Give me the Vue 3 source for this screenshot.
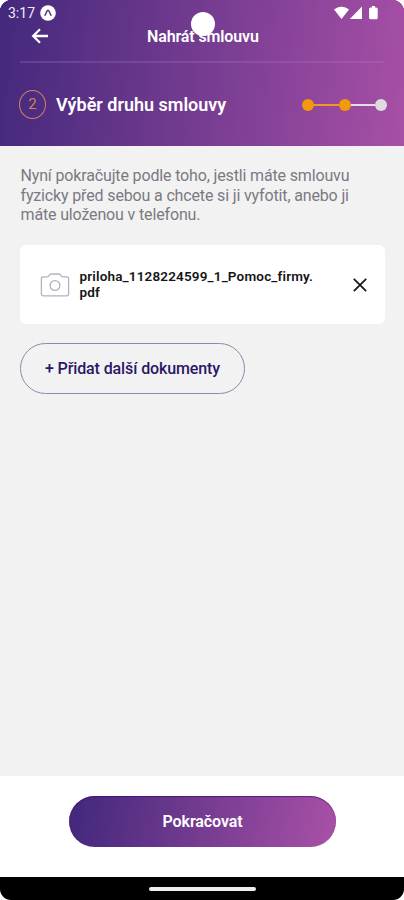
<template>
  <div class="screen">
    <header class="header">
      <div class="status-bar">
        <span class="time">3:17</span>
        <svg class="app-icon" viewBox="0 0 16 16">
          <circle cx="8" cy="8" r="7.800" fill="#fff" />
          <path d="M4.600 10.800C5.800 9.600 6.600 5.200 8 5.200s2.200 4.400 3.400 5.600" fill="none" stroke="#5a3587" stroke-width="1.500" />
        </svg>
        <svg class="signals" viewBox="0 0 45 14">
          <path d="M0 3.600C4.200-.3 10.800-.3 15 3.600L7.500 13z" fill="#fff" />
          <path d="M28 .6V13H15.800z" fill="#fff" />
          <path d="M37.800 0h3.200v1.400h1.100a1.600 1.600 0 0 1 1.600 1.600v8.700a1.600 1.600 0 0 1-1.600 1.600h-5.400a1.600 1.600 0 0 1-1.600-1.600V3a1.600 1.600 0 0 1 1.600-1.600h1.100z" fill="#fff" />
        </svg>
      </div>
      <div class="nav">
        <button class="back" aria-label="Zpět">
          <svg viewBox="0 0 18 16">
            <path d="M17 8H3M9 1.200L2.200 8 9 14.800" fill="none" stroke="#fff" stroke-width="2.300" />
          </svg>
        </button>
        <h1 class="title">Nahrát smlouvu</h1>
      </div>
      <div class="step">
        <span class="step-number">2</span>
        <h2 class="step-title">Výběr druhu smlouvy</h2>
        <div class="progress">
          <template v-for="n in steps" :key="n">
            <span v-if="n > 1" class="line" :class="{ done: n <= current }"></span>
            <span class="dot" :class="{ done: n <= current }"></span>
          </template>
        </div>
      </div>
      <span class="camera-hole"></span>
    </header>

    <main class="content">
      <p class="info">
        Nyní pokračujte podle toho, jestli máte smlouvu<br />
        fyzicky před sebou a chcete si ji vyfotit, anebo ji<br />
        máte uloženou v telefonu.
      </p>
      <div v-for="file in files" :key="file.id" class="file">
        <svg class="file-icon" viewBox="0 0 30 24">
          <path d="M3.200 3.800h4.200c1.700 0 1.900-2.800 3.600-2.800h8c1.700 0 1.900 2.800 3.600 2.800h4.200a1.800 1.800 0 0 1 1.800 1.800v15.400a1.800 1.800 0 0 1-1.800 1.800H3.200a1.800 1.800 0 0 1-1.800-1.800V5.600a1.800 1.800 0 0 1 1.800-1.800z" fill="none" stroke="#b3b2bd" stroke-width="1.300" />
          <circle cx="15" cy="12.500" r="4.900" fill="none" stroke="#b3b2bd" stroke-width="1.300" />
        </svg>
        <span class="file-name">{{ file.name }}<br />{{ file.ext }}</span>
        <button class="remove" aria-label="Odebrat" @click="removeFile(file.id)">
          <svg viewBox="0 0 14 14">
            <path d="M.8.8l12.400 12.400M13.200.8L.8 13.200" fill="none" stroke="#161616" stroke-width="1.700" />
          </svg>
        </button>
      </div>
      <button class="add">+ Přidat další dokumenty</button>
    </main>

    <footer class="footer">
      <button class="continue">Pokračovat</button>
    </footer>
    <div class="system-nav"><div class="system-inner"><span class="handle"></span></div></div>
  </div>
</template>

<script setup>
import { ref } from "vue"

const steps = 3
const current = 2
const files = ref([{ id: 1, name: "priloha_1128224599_1_Pomoc_firmy.", ext: "pdf" }])

const removeFile = (id) => {
  files.value = files.value.filter((file) => file.id !== id)
}
</script>

<style>
body {
  margin: 0;
  background: #fff;
}
</style>

<style scoped>
.screen {
  display: flex;
  flex-direction: column;
  width: 404px;
  height: 900px;
  overflow: hidden;
  background: #f2f2f2;
  font-family: Roboto, sans-serif;
}
.screen * {
  box-sizing: border-box;
}
button {
  padding: 0;
  border: none;
  background: none;
  font-family: inherit;
}
h1,
h2,
p {
  margin: 0;
}
svg {
  display: block;
  flex: none;
}
.header {
  position: relative;
  flex: none;
  height: 146px;
  background: linear-gradient(97deg, #45297d 2%, #a54fa5 98%);
}
/* rounded corners of the display */
.header::before,
.header::after {
  content: "";
  position: absolute;
  top: 0;
  width: 12px;
  height: 12px;
}
.header::before {
  left: 0;
  background: radial-gradient(circle at 12px 12px, transparent 12px, #fff 12.600px);
}
.header::after {
  right: 0;
  background: radial-gradient(circle at 0 12px, transparent 12px, #fff 12.600px);
}
.status-bar {
  display: flex;
  align-items: center;
  height: 25px;
  padding-left: 8px;
}
.time {
  width: 32px;
  padding-top: 1px;
  color: #f1eaf6;
  font-size: 14px;
  line-height: 25px;
}
.app-icon {
  width: 16px;
  height: 16px;
}
.signals {
  width: 45px;
  height: 14px;
  margin-left: 278px;
}
.nav {
  display: flex;
  align-items: center;
  height: 38px;
  margin: 0 20px;
  padding-bottom: 14px;
  border-bottom: 2px solid rgba(175, 125, 205, 0.25);
}
.back {
  margin-left: 11px;
}
.back svg {
  width: 18px;
  height: 16px;
}
.title {
  margin-left: 98px;
  padding-top: 1px;
  color: #fff;
  font-size: 16px;
  font-weight: 600;
  line-height: 20px;
  letter-spacing: -0.120px;
  white-space: nowrap;
}
.step {
  display: flex;
  align-items: center;
  height: 83px;
  padding: 0 17px 0 19px;
}
.step-number {
  width: 27px;
  height: 29px;
  border: 1.500px solid #cf825f;
  border-radius: 50%;
  color: #cf825f;
  font-size: 15px;
  line-height: 27px;
  text-align: center;
}
.step-title {
  margin-left: 10px;
  color: #fff;
  font-size: 18px;
  font-weight: 600;
  white-space: nowrap;
}
.progress {
  display: flex;
  align-items: center;
  margin-left: auto;
}
.dot {
  width: 12px;
  height: 12px;
  border-radius: 50%;
  background: #dedce0;
}
.line {
  width: 24.500px;
  height: 2px;
  background: #e6dce9;
}
.dot.done {
  background: #f29a0c;
}
.line.done {
  background: #f09a25;
}
.camera-hole {
  position: absolute;
  top: 12px;
  left: 191px;
  width: 24px;
  height: 24px;
  border-radius: 50%;
  background: #fff;
}
.content {
  flex: 1;
  padding: 20px 19px 0 20px;
}
.info {
  height: 79px;
  padding-left: 0.500px;
  color: #7b7982;
  font-size: 16px;
  line-height: 19.500px;
  letter-spacing: -0.150px;
  white-space: nowrap;
}
.file {
  display: flex;
  align-items: center;
  height: 79px;
  padding: 0 18px 0 20px;
  border-radius: 6px;
  background: #fff;
}
.file-icon {
  width: 30px;
  height: 24px;
}
.file-name {
  margin-left: 9.500px;
  padding-bottom: 1px;
  color: #151515;
  font-size: 13.500px;
  font-weight: 600;
  line-height: 16px;
  letter-spacing: 0.170px;
  white-space: nowrap;
}
.remove {
  margin-left: auto;
}
.remove svg {
  width: 14px;
  height: 14px;
}
.add {
  width: 225px;
  height: 51px;
  margin-top: 19px;
  border: 1px solid #8e8aa5;
  border-radius: 26px;
  color: #2c1766;
  font-size: 16px;
  font-weight: 500;
  letter-spacing: -0.110px;
  white-space: nowrap;
}
.footer {
  flex: none;
  height: 101px;
  padding: 20px 0 0 69px;
  background: #fff;
}
.continue {
  width: 267px;
  height: 51px;
  border-radius: 26px;
  background: linear-gradient(100deg, #45297d 4%, #a54fa5 96%);
  box-shadow: inset 0 1px 1px rgba(64, 0, 110, 0.6);
  color: #fff;
  font-size: 16px;
  font-weight: 600;
  letter-spacing: -0.080px;
}
.system-nav {
  flex: none;
  height: 23px;
  background: #fff;
}
.system-inner {
  display: flex;
  justify-content: center;
  height: 23px;
  padding-top: 9.500px;
  border-radius: 0 0 11px 11px;
  background: #000;
}
.handle {
  width: 107px;
  height: 4.500px;
  border-radius: 2px;
  background: #eee;
}
</style>
